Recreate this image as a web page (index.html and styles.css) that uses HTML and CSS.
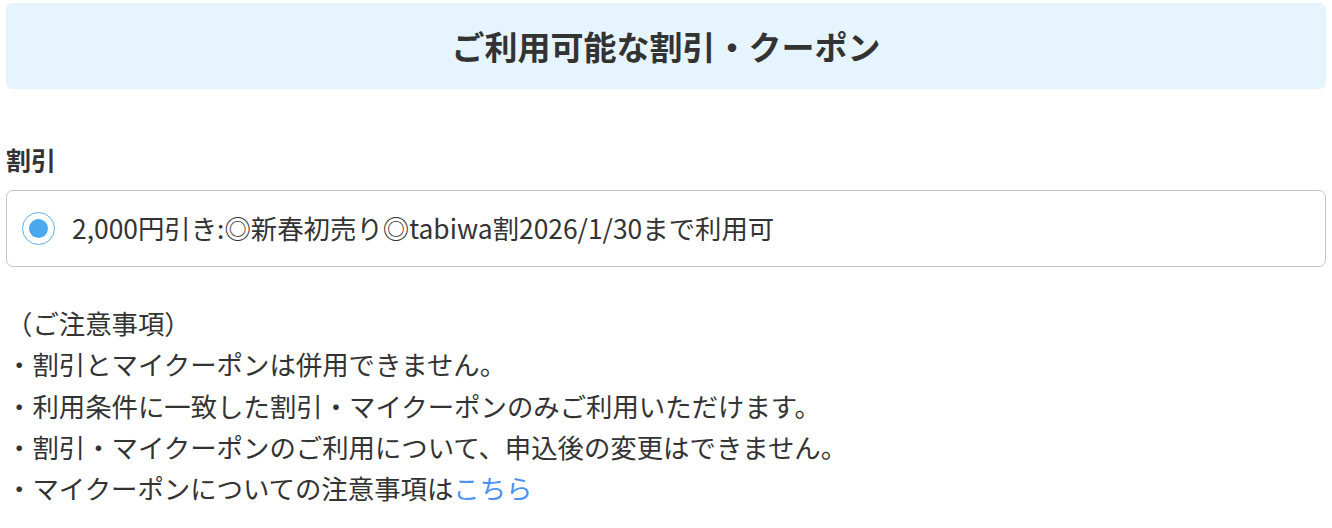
FILE: index.html
```html
<!DOCTYPE html>
<html lang="ja">
<head>
<meta charset="utf-8">
<link rel="stylesheet" href="styles.css">
</head>
<body>
<div class="page">
  <header class="title-box"><h1 class="title">ご利用可能な割引・クーポン</h1></header>
  <section class="discount">
    <h2 class="label">割引</h2>
    <label class="option">
      <span class="radio"><span class="dot"></span></span>
      <span class="option-text">2,000円引き:◎新春初売り◎tabiwa割2026/1/30まで利用可</span>
    </label>
  </section>
  <div class="notes">
    <p>（ご注意事項）</p>
    <p>・割引とマイクーポンは併用できません。</p>
    <p>・利用条件に一致した割引・マイクーポンのみご利用いただけます。</p>
    <p>・割引・マイクーポンのご利用について、申込後の変更はできません。</p>
    <p>・マイクーポンについての注意事項は<a class="link" href="#">こちら</a></p>
  </div>
</div>
</body>
</html>
```
FILE: styles.css
```css
html, body { margin: 0; padding: 0; background: #fff; }
body {
  font-family: "Noto Sans CJK JP", "Noto Sans", sans-serif;
  color: #333;
}
.page { padding: 3px 6px 0 6px; }
.title-box {
  background: #e6f4fe;
  border-radius: 6px;
  height: 86px;
  display: flex;
  align-items: center;
  justify-content: center;
}
.title {
  margin: 0;
  font-size: 33px;
  font-weight: 700;
  line-height: 1;
  color: #333;
}
.discount { margin-top: 52px; }
.label {
  margin: 0 0 13px 0;
  font-size: 25px;
  font-weight: 700;
  line-height: 36px;
}
.option {
  display: flex;
  align-items: center;
  height: 75px;
  border: 1px solid #c6c6c6;
  border-radius: 7px;
  padding: 0 0 0 15px;
  box-sizing: content-box;
}
.radio {
  width: 31px;
  height: 31px;
  border: 1.5px solid #5aaef2;
  border-radius: 50%;
  display: flex;
  align-items: center;
  justify-content: center;
  flex: none;
}
.dot {
  width: 19px;
  height: 19px;
  border-radius: 50%;
  background: #4aa8ef;
}
.option-text {
  margin-left: 17px;
  font-size: 26.4px;
  line-height: 1.6;
}
.notes { margin-top: 35px; }
.notes p {
  margin: 0;
  font-size: 26.4px;
  line-height: 41.3px;
}
.link { color: #4a90f5; text-decoration: none; }
```
